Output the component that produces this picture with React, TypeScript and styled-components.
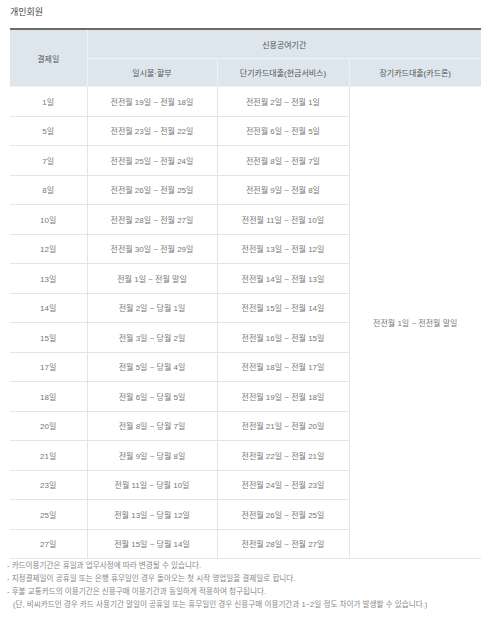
import { createGlobalStyle, styled } from "styled-components";

const GlobalStyle = createGlobalStyle`
  body {
    margin: 0;
    background: #ffffff;
    font-family: "Liberation Sans", "Noto Sans CJK KR", sans-serif;
  }
`;

const Page = styled.div`
  padding: 6px 19px 20px 7px;
`;

const Title = styled.h3`
  margin: 0 0 9px 3px;
  font-size: 9px;
  font-weight: normal;
  color: #444;
  line-height: 13px;
`;

const Table = styled.table`
  margin-left: 3px;
  width: 471px;
  border-collapse: collapse;
  table-layout: fixed;
  border-top: 2px solid #6b6b6b;
  border-bottom: 1px solid #dcdcdc;
`;

const Th = styled.th<{ $h?: number }>`
  height: ${(p) => p.$h ?? 27}px;
  padding: 0;
  background: #dde6ec;
  color: #555;
  font-size: 8px;
  font-weight: normal;
  text-align: center;
  border: 1px solid #eef2f5;
  border-top: none;
  &:first-child {
    border-left: none;
  }
  &:last-child {
    border-right: none;
  }
`;

const Td = styled.td`
  height: 28.5px;
  padding: 0;
  color: #777;
  font-size: 8px;
  text-align: center;
  border: 1px solid #e4e4e4;
  &:first-child {
    border-left: none;
  }
`;

const LoanCell = styled(Td)`
  border-right: none;
`;

const Notes = styled.ul`
  list-style: none;
  margin: 0;
  padding: 0;
`;

const Note = styled.li<{ $indent?: boolean }>`
  font-size: 7.6px;
  line-height: 13px;
  color: #888;
  padding-left: ${(p) => (p.$indent ? "6px" : "0")};
`;

const rows: [string, string, string][] = [
  ["1일", "전전월 19일 ~ 전월 18일", "전전월 2일 ~ 전월 1일"],
  ["5일", "전전월 23일 ~ 전월 22일", "전전월 6일 ~ 전월 5일"],
  ["7일", "전전월 25일 ~ 전월 24일", "전전월 8일 ~ 전월 7일"],
  ["8일", "전전월 26일 ~ 전월 25일", "전전월 9일 ~ 전월 8일"],
  ["10일", "전전월 28일 ~ 전월 27일", "전전월 11일 ~ 전월 10일"],
  ["12일", "전전월 30일 ~ 전월 29일", "전전월 13일 ~ 전월 12일"],
  ["13일", "전월 1일 ~ 전월 말일", "전전월 14일 ~ 전월 13일"],
  ["14일", "전월 2일 ~ 당월 1일", "전전월 15일 ~ 전월 14일"],
  ["15일", "전월 3일 ~ 당월 2일", "전전월 16일 ~ 전월 15일"],
  ["17일", "전월 5일 ~ 당월 4일", "전전월 18일 ~ 전월 17일"],
  ["18일", "전월 6일 ~ 당월 5일", "전전월 19일 ~ 전월 18일"],
  ["20일", "전월 8일 ~ 당월 7일", "전전월 21일 ~ 전월 20일"],
  ["21일", "전월 9일 ~ 당월 8일", "전전월 22일 ~ 전월 21일"],
  ["23일", "전월 11일 ~ 당월 10일", "전전월 24일 ~ 전월 23일"],
  ["25일", "전월 13일 ~ 당월 12일", "전전월 26일 ~ 전월 25일"],
  ["27일", "전월 15일 ~ 당월 14일", "전전월 28일 ~ 전월 27일"],
];

export default function App() {
  return (
    <Page>
      <GlobalStyle />
      <Title>개인회원</Title>
      <Table>
        <colgroup>
          <col style={{ width: 77 }} />
          <col style={{ width: 130 }} />
          <col style={{ width: 132 }} />
          <col style={{ width: 132 }} />
        </colgroup>
        <thead>
          <tr>
            <Th rowSpan={2}>결제일</Th>
            <Th colSpan={3} $h={28}>
              신용공여기간
            </Th>
          </tr>
          <tr>
            <Th>일시불·할부</Th>
            <Th>단기카드대출(현금서비스)</Th>
            <Th>장기카드대출(카드론)</Th>
          </tr>
        </thead>
        <tbody>
          {rows.map(([day, lump, cash], i) => (
            <tr key={day}>
              <Td>{day}</Td>
              <Td>{lump}</Td>
              <Td>{cash}</Td>
              {i === 0 && (
                <LoanCell rowSpan={rows.length}>전전월 1일 ~ 전전월 말일</LoanCell>
              )}
            </tr>
          ))}
        </tbody>
      </Table>
      <Notes>
        <Note>- 카드이용기간은 휴일과 업무사정에 따라 변경될 수 있습니다.</Note>
        <Note>- 지정결제일이 공휴일 또는 은행 휴무일인 경우 돌아오는 첫 시작 영업일을 결제일로 합니다.</Note>
        <Note>- 후불 교통카드의 이용기간은 신용구매 이용기간과 동일하게 적용하여 청구됩니다.</Note>
        <Note $indent>
          (단, 비씨카드인 경우 카드 사용기간 말일이 공휴일 또는 휴무일인 경우 신용구매 이용기간과 1~2일 정도 차이가 발생할 수 있습니다.)
        </Note>
      </Notes>
    </Page>
  );
}
